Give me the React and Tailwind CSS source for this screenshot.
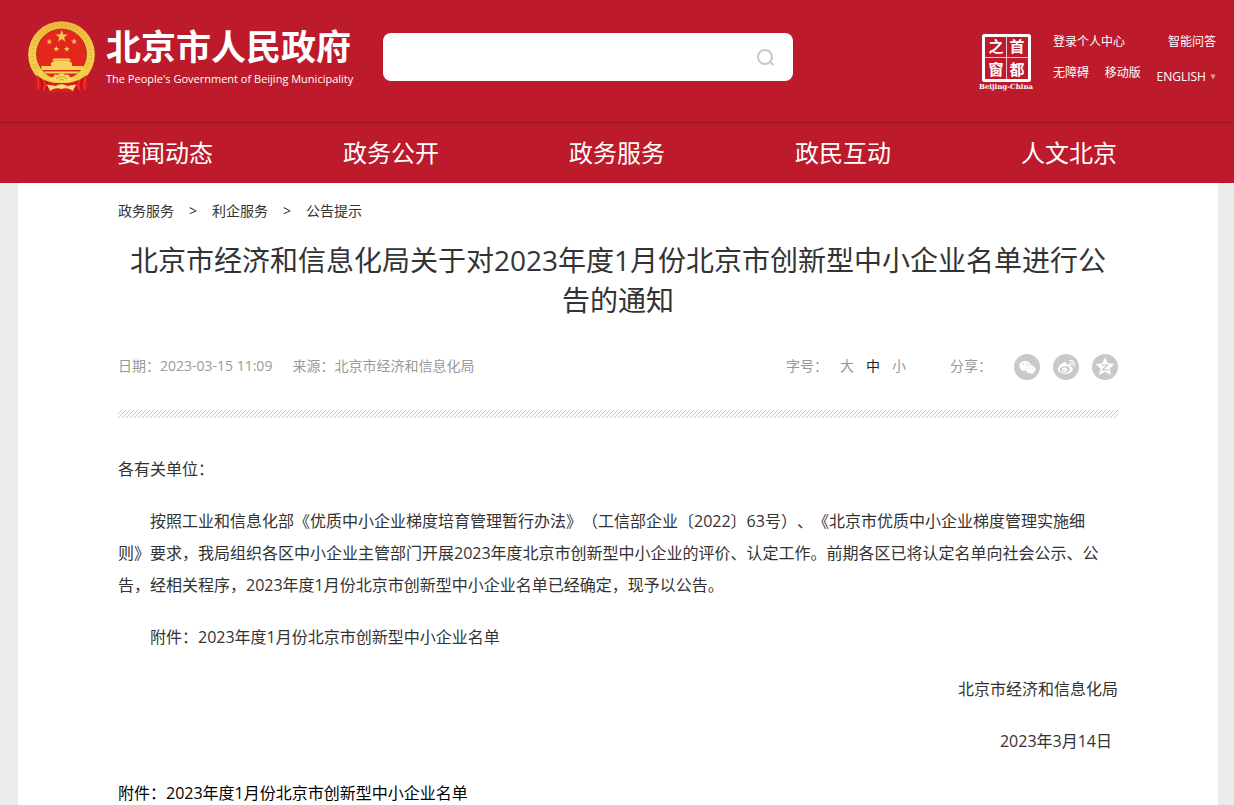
import React, { useState } from 'react';
import { FaWeibo, FaWeixin } from 'react-icons/fa';

const NAV = ['要闻动态', '政务公开', '政务服务', '政民互动', '人文北京'];

const CRUMBS = ['政务服务', '利企服务', '公告提示'];

const SIZES = ['大', '中', '小'];

const STAR = '0,-10 2.4,-3.2 9.5,-3.1 3.8,1.2 5.9,8.1 0,4 -5.9,8.1 -3.8,1.2 -9.5,-3.1 -2.4,-3.2';

// wider arms than STAR, for the Qzone mark
const FAT_STAR = '0,-10 3,-3.8 9.8,-3 4.8,1.7 6.1,8.4 0,5.1 -6.1,8.4 -4.8,1.7 -9.8,-3 -3,-3.8';

const Emblem = () => (
  <svg width="68" height="72" viewBox="0 0 68 72" aria-hidden="true">
    <defs>
      <linearGradient id="gold" x1="0" y1="0" x2="0" y2="1">
        <stop offset="0" stopColor="#eeb73c" />
        <stop offset="0.5" stopColor="#f5d04c" />
        <stop offset="1" stopColor="#f6cb45" />
      </linearGradient>
    </defs>
    {/* wreath */}
    <circle cx="33.5" cy="33.5" r="33.3" fill="url(#gold)" />
    <circle cx="33.5" cy="33.5" r="29" fill="none" stroke="#dd9c2a" strokeWidth="3.5" strokeDasharray="1.5 2.5" opacity="0.4" />
    {/* red drapery */}
    <path d="M9 50 C15 57 24 59 33.5 59 C43 59 52 57 58 50 C57 56 61 61 59 68 C56 71 51 68 47 71 C42 72 38 71 33.5 71 C29 71 25 72 20 71 C16 68 11 71 8 68 C6 61 10 56 9 50 Z" fill="#dc1c1e" />
    <path d="M12 56 C13 61 16 62 13 69 M17 59 C21 62 20 66 18 70 M55 56 C54 61 51 62 54 69 M50 59 C46 62 47 66 49 70" stroke="#a80f18" strokeWidth="1.2" fill="none" />
    <path d="M9.5 56 C10 61 12 64 9.5 68 M15 58 C18 62 17 66 15 69 M57.5 56 C57 61 55 64 57.5 68 M52 58 C49 62 50 66 52 69" stroke="#f4392c" strokeWidth="1.2" fill="none" />
    {/* lower ring, sweeping in to the gear */}
    <path d="M8 42 C12 53 20 58 28 58 L39 58 C47 58 55 53 59 42 L63 48 C58 56 50 61 39 62 L28 62 C17 61 9 56 4 48 Z" fill="url(#gold)" />
    <circle cx="33.5" cy="33" r="25" fill="#e5261f" stroke="#9c301a" strokeWidth="0.8" />
    {/* stars */}
    <g fill="#f2cb55">
      <polygon points={STAR} transform="translate(33.7 15.5) scale(0.64)" />
      <polygon points={STAR} transform="translate(21.3 20.7) scale(0.32)" />
      <polygon points={STAR} transform="translate(46 20.5) scale(0.32)" />
      <polygon points={STAR} transform="translate(28.3 28) scale(0.32)" />
      <polygon points={STAR} transform="translate(38.8 28) scale(0.32)" />
    </g>
    {/* gate tower */}
    <g fill="#f6d257">
      <path d="M25.5 37.5 H41.5 L43 39.5 H24 Z" />
      <rect x="25.5" y="39.5" width="16" height="1.5" />
      <path d="M24 41 H43 L44.5 43 H22.5 Z" />
      <path d="M23 43 H44 V45 H55 V49 H13.5 V45 H23 Z" />
      <path d="M15 50.5 H52 L49 52.5 H18 Z" />
    </g>
    {/* gear and ribbons */}
    <path d="M25 56 L27 53.5 L30 54 L31.5 52.5 L35.5 52.5 L37 54 L40 53.5 L42 56 L46 57.5 L42 61 H25 L21 57.5 Z" fill="#f8db60" />
    <path d="M28 58 C30 55 37 55 39 58 M31 59.5 C32 58 35 58 36 59.5" stroke="#cf8d24" strokeWidth="0.8" fill="none" />
    <path d="M18.5 63.5 L28 65 C31 62.5 36 62.5 39 65 L48.5 63.5 L44.5 70 C42 67.5 38 66.5 33.5 68 C29 66.5 25 67.5 22.5 70 Z" fill="#f9df7a" />
  </svg>
);

const CapitalWindow = () => (
  <svg width="56" height="58" viewBox="0 0 56 58" role="img" aria-label="首都之窗">
    <rect x="5.5" y="2.5" width="46" height="45" rx="1" fill="none" stroke="#fff" strokeWidth="3" />
    <path d="M28.5 4 V46 M7 24.5 H50" stroke="#fff" strokeWidth="1" opacity="0.75" />
    <g fill="#fff" fontFamily="'Noto Sans CJK SC', sans-serif" fontWeight="700" fontSize="15" textAnchor="middle">
      <text x="18" y="19">之</text>
      <text x="39" y="19">首</text>
      <text x="18" y="42">窗</text>
      <text x="39" y="42">都</text>
    </g>
    <text x="28" y="56" fill="#fff" fontFamily="'DejaVu Serif', serif" fontWeight="700" fontSize="7" textAnchor="middle">
      Beijing-China
    </text>
  </svg>
);

const QzoneIcon = () => (
  <svg width="18" height="18" viewBox="-10 -10 20 20" aria-hidden="true">
    <polygon points={FAT_STAR} fill="#fff" stroke="#fff" strokeWidth="0.6" strokeLinejoin="round" />
    <path d="M-3.5 -2 H3 L-3 3.2 H4" stroke="#c9c9c9" strokeWidth="1.3" fill="none" />
  </svg>
);

const SHARE = [
  { name: '微信', icon: <FaWeixin size={17} /> },
  { name: '微博', icon: <FaWeibo size={17} /> },
  { name: 'QQ空间', icon: <QzoneIcon /> },
];

const Header = () => (
  <header className="bg-[#bd1a2c] text-white">
    <div className="flex h-[123px] items-start border-b border-[#951522] pr-[18px] pl-7">
      <a href="#" className="mt-[21px] flex shrink-0">
        <Emblem />
        <div className="ml-[10px] w-[245px] whitespace-nowrap">
          <div className="mt-2 text-[35px] leading-[36px] font-bold">北京市人民政府</div>
          <div className="mt-1 text-[11px] leading-[20px]">The People's Government of Beijing Municipality</div>
        </div>
      </a>

      <form
        className="mt-[33px] ml-8 flex h-12 w-[410px] items-center rounded-lg bg-white pr-[17px]"
        onSubmit={(e) => e.preventDefault()}
      >
        <input type="text" aria-label="搜索" className="h-full min-w-0 flex-1 bg-transparent px-4 text-base text-gray-800 outline-none" />
        <button type="submit" aria-label="搜索">
          <svg width="20" height="20" viewBox="0 0 20 20" fill="none" stroke="#c8c8c8" strokeWidth="2">
            <circle cx="9" cy="10" r="7" />
            <path d="M13.5 14.5 L17.5 18" />
          </svg>
        </button>
      </form>

      <div className="mt-[33px] ml-auto flex shrink-0 text-[12px] leading-[18px] whitespace-nowrap">
        <CapitalWindow />
        <div className="ml-[19px] w-[163px]">
          <div className="flex justify-between">
            <a href="#">登录个人中心</a>
            <a href="#">智能问答</a>
          </div>
          <div className="mt-[13px] flex items-start justify-between">
            <a href="#">无障碍</a>
            <a href="#">移动版</a>
            <a href="#" className="mt-1 flex items-center gap-1">
              ENGLISH
              <svg width="6" height="6" viewBox="0 0 6 6" aria-hidden="true">
                <path d="M0.5 0.5 H5.5 L3 5.5 Z" fill="#dcae78" />
              </svg>
            </a>
          </div>
        </div>
      </div>
    </div>

    <nav className="mx-auto flex h-[60px] max-w-[1000px] items-center justify-between text-[24px] leading-[32px]">
      {NAV.map((item) => (
        <a href="#" key={item}>
          {item}
        </a>
      ))}
    </nav>
  </header>
);

const App = () => {
  const [size, setSize] = useState('中');

  return (
    <div className="min-h-screen bg-[#ececec] font-['Open_Sans','Noto_Sans_CJK_SC',sans-serif] text-[#333] [text-spacing-trim:space-all]" lang="zh-CN">
      <Header />

      <div className="pr-4 pl-[18px]">
        <main className="mx-auto max-w-[1200px] bg-white px-[100px] pt-[18px]">
          <div className="flex gap-[15px] text-[14px] leading-[20px]">
            {CRUMBS.map((crumb, i) => (
              <React.Fragment key={crumb}>
                {i > 0 && <span>&gt;</span>}
                <a href="#">{crumb}</a>
              </React.Fragment>
            ))}
          </div>

          <h1 className="mt-[19px] text-center text-[28px] leading-[40px]">
            北京市经济和信息化局关于对2023年度1月份北京市创新型中小企业名单进行公告的通知
          </h1>

          <div className="mt-[34px] flex h-[26px] items-start text-[14px] leading-[24px] text-[#999]">
            <span>日期：2023-03-15 11:09</span>
            <span className="ml-5">来源：北京市经济和信息化局</span>
            <div className="ml-auto flex items-start">
              <span>字号：</span>
              <div className="ml-3 flex gap-3">
                {SIZES.map((s) => (
                  <button
                    type="button"
                    key={s}
                    onClick={() => setSize(s)}
                    className={size === s ? 'text-[#222]' : ''}
                  >
                    {s}
                  </button>
                ))}
              </div>
              <span className="ml-11">分享：</span>
              <div className="ml-[22px] flex gap-[13px]">
                {SHARE.map(({ name, icon }) => (
                  <button
                    type="button"
                    key={name}
                    aria-label={name}
                    className="flex h-[26px] w-[26px] items-center justify-center rounded-full bg-[#c9c9c9] text-white"
                  >
                    {icon}
                  </button>
                ))}
              </div>
            </div>
          </div>

          <div className="mt-[30px] h-2 bg-[linear-gradient(135deg,transparent_38%,#c8c8c8_38%,#c8c8c8_62%,transparent_62%)] bg-[length:4px_4px]" />

          <article className="mt-[35px] space-y-5 text-[16px] leading-[32px]">
            <p>各有关单位：</p>
            <p className="indent-8">
              按照工业和信息化部《优质中小企业梯度培育管理暂行办法》（工信部企业〔2022〕63号）、《北京市优质中小企业梯度管理实施细
              <br />
              则》要求，我局组织各区中小企业主管部门开展2023年度北京市创新型中小企业的评价、认定工作。前期各区已将认定名单向社会公示、公告，经相关程序，2023年度1月份北京市创新型中小企业名单已经确定，现予以公告。
            </p>
            <p className="indent-8">附件：2023年度1月份北京市创新型中小企业名单</p>
            <p className="text-right">北京市经济和信息化局</p>
            <p className="pr-[6px] text-right">2023年3月14日</p>
            <p className="text-black">
              <a href="#">附件：2023年度1月份北京市创新型中小企业名单</a>
            </p>
          </article>
        </main>
      </div>
    </div>
  );
};

export default App;
